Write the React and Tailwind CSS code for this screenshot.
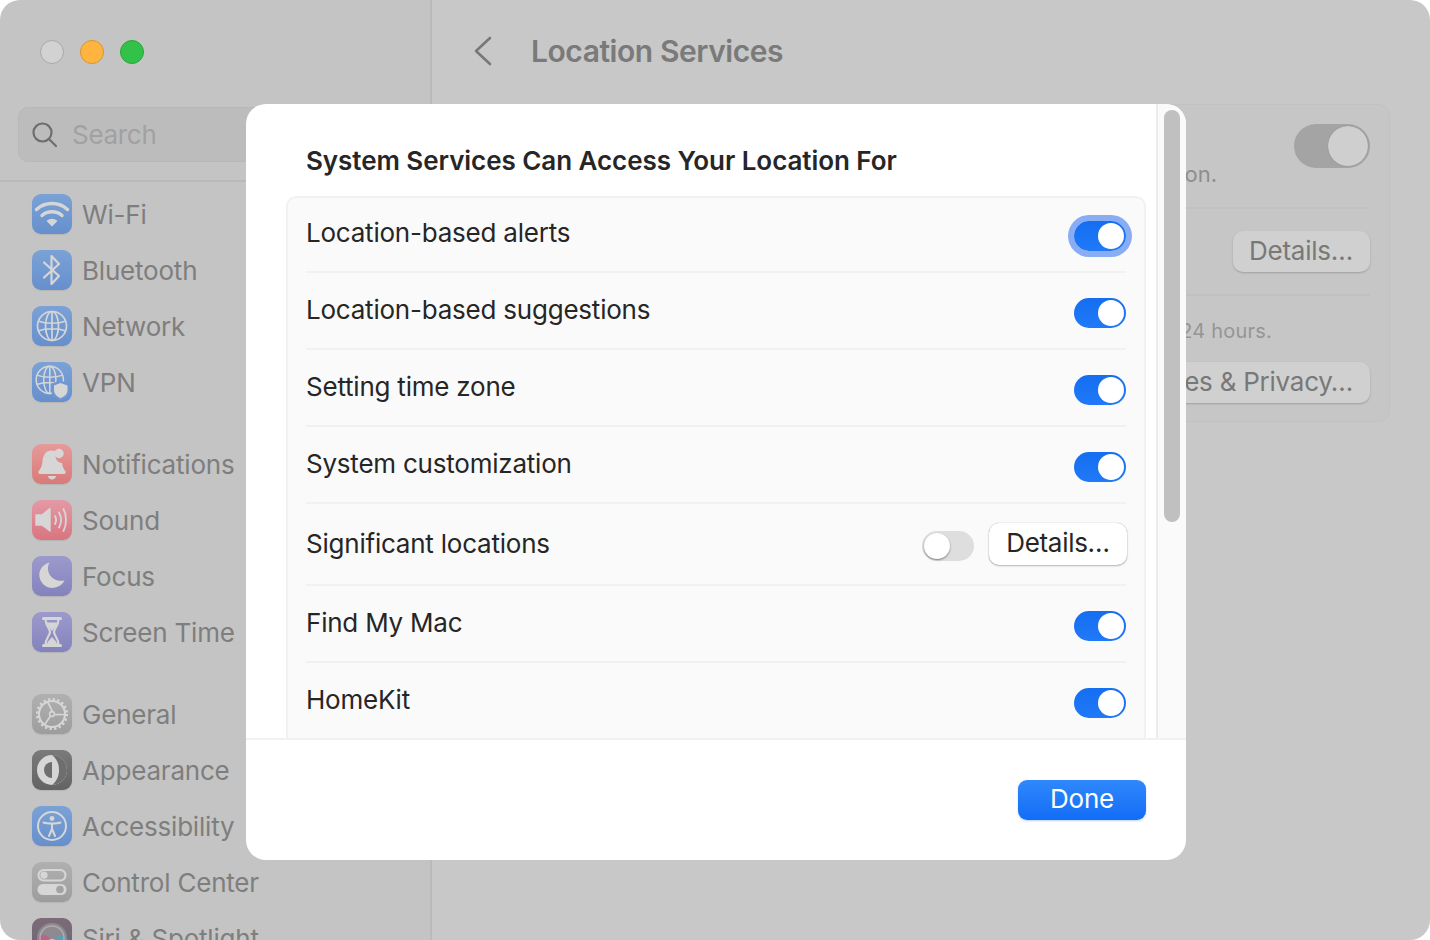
const stroke = '#d6d6d6'

function WifiIcon() {
  return (
    <svg viewBox="0 0 40 40" className="w-10 h-10" fill="none" stroke={stroke} strokeLinecap="round">
      <path d="M4.5 15.5C13 7.5 27 7.5 35.5 15.5" strokeWidth="3.4" />
      <path d="M10 21.5C15.5 16.5 24.5 16.5 30 21.5" strokeWidth="3.4" />
      <path d="M15.5 27C18 25 22 25 24.5 27L20 31.5Z" fill={stroke} strokeWidth="1.4" strokeLinejoin="round" />
    </svg>
  )
}

function BluetoothIcon() {
  return (
    <svg viewBox="0 0 40 40" className="w-10 h-10" fill="none" stroke={stroke} strokeWidth="2.2" strokeLinecap="round" strokeLinejoin="round">
      <path d="M12 12.5L27 26L19.5 34V6L27 14L12 27.5" />
    </svg>
  )
}

function Globe({ small }) {
  return (
    <g fill="none" stroke={stroke} strokeWidth={small ? 1.6 : 1.7}>
      <circle cx="20" cy="20" r="14.5" />
      <ellipse cx="20" cy="20" rx="6.5" ry="14.5" />
      <path d="M6 15C14 18 26 18 34 15M6 25C14 22 26 22 34 25M20 5.5V34.5" />
    </g>
  )
}

function NetworkIcon() {
  return (
    <svg viewBox="0 0 40 40" className="w-10 h-10">
      <Globe />
    </svg>
  )
}

function VpnIcon() {
  return (
    <svg viewBox="0 0 40 40" className="w-10 h-10">
      <g transform="translate(-1 -1) scale(0.94)">
        <Globe small />
      </g>
      <path d="M28 19.5L37 22.5V28C37 32.5 33.5 35.5 28 37.5C24 35.5 20 32.5 20 28V22.5Z" fill="#6f98d2" stroke="#6f98d2" strokeWidth="2" />
      <path d="M28.5 21L35.5 23.5V28C35.5 32 32.5 34.5 28.5 36.3C25 34.5 22 32 22 28V23.5Z" fill={stroke} />
    </svg>
  )
}

function BellIcon() {
  return (
    <svg viewBox="0 0 40 40" className="w-10 h-10" fill={stroke}>
      <path d="M20 6.5C13.5 6.5 11 11.5 10.5 17C10 22.5 8.5 25 6.5 27.5C6 28.5 6.5 30 8 30H32C33.5 30 34 28.5 33.5 27.5C31.5 25 30.3 22 30 19C26 19 22.5 15.5 23.3 7.3C22.3 6.8 21.2 6.5 20 6.5Z" />
      <circle cx="27" cy="9.5" r="4.7" />
      <path d="M16 32H24C23.6 34.3 22 35.5 20 35.5C18 35.5 16.4 34.3 16 32Z" />
    </svg>
  )
}

function SoundIcon() {
  return (
    <svg viewBox="0 0 40 40" className="w-10 h-10" fill="none" stroke={stroke} strokeLinecap="round">
      <path d="M4 15H10L18 8.5V31L10 25H4Z" fill={stroke} strokeWidth="1.4" strokeLinejoin="round" />
      <path d="M23 16C24.4 18.5 24.4 21.5 23 24" strokeWidth="1.8" />
      <path d="M27 12.5C29.5 17 29.5 23 27 27.5" strokeWidth="1.8" />
      <path d="M31.5 9C34.8 15 34.8 25 31.5 31" strokeWidth="1.8" />
    </svg>
  )
}

function MoonIcon() {
  return (
    <svg viewBox="0 0 40 40" className="w-10 h-10" fill={stroke}>
      <path d="M17.5 6.5C9.5 9 6.5 15 7.5 21C8.8 28.5 15.5 32.5 21.5 31.8C26.5 31.3 30.5 28.5 32.5 24.5C25.5 26 18.5 22.5 16.5 16C15.5 12.5 16 9 17.5 6.5Z" />
    </svg>
  )
}

function HourglassIcon() {
  return (
    <svg viewBox="0 0 40 40" className="w-10 h-10" fill="none" stroke={stroke} strokeLinecap="round" strokeLinejoin="round">
      <path d="M11.5 6.5H28.5M11.5 33.5H28.5" strokeWidth="3" />
      <path d="M13.5 7C13.5 14 18 16.5 18 20C18 23.5 13.5 26 13.5 33M26.5 7C26.5 14 22 16.5 22 20C22 23.5 26.5 26 26.5 33" strokeWidth="2.2" />
      <path d="M15.5 11H24.5C24 14 21 16.5 20 18.5C19 16.5 16 14 15.5 11Z" fill={stroke} strokeWidth="1" />
      <path d="M15.5 32C15.8 29 19 27 20 25.5C21 27 24.2 29 24.5 32Z" fill={stroke} strokeWidth="1" />
    </svg>
  )
}

function GearIcon() {
  return (
    <svg viewBox="0 0 40 40" className="w-10 h-10" fill="none" stroke={stroke}>
      <circle cx="20" cy="20" r="13" strokeWidth="2" />
      <circle cx="20" cy="20" r="14.6" strokeWidth="3" strokeDasharray="2.2 2.4" />
      <circle cx="20" cy="20" r="2.4" strokeWidth="1.6" />
      <path d="M20.5 17.6L16 8.5M22.3 20.6L32 20.5M18.5 22L13 30" strokeWidth="1.7" />
    </svg>
  )
}

function AppearanceIcon() {
  return (
    <svg viewBox="0 0 40 40" className="w-10 h-10">
      <circle cx="20" cy="20" r="15" fill={stroke} />
      <path d="M20 5A15 15 0 0 1 20 35C25 31 27 26 27 20C27 14 25 9 20 5Z" fill="#6e6e6e" />
      <path d="M20 12A8 8 0 0 0 20 28Z" fill="#6e6e6e" />
    </svg>
  )
}

function AccessibilityIcon() {
  return (
    <svg viewBox="0 0 40 40" className="w-10 h-10" fill="none" stroke={stroke}>
      <circle cx="20" cy="20" r="14" strokeWidth="2" />
      <circle cx="20" cy="12.5" r="2.4" fill={stroke} stroke="none" />
      <path d="M11.5 16.5C15 17.8 25 17.8 28.5 16.5M20 18V23M20 23L17 30M20 23L23 30" strokeWidth="2.1" strokeLinecap="round" />
    </svg>
  )
}

function ControlIcon() {
  return (
    <svg viewBox="0 0 40 40" className="w-10 h-10">
      <rect x="6.5" y="8" width="27" height="10.5" rx="5.2" fill="none" stroke={stroke} strokeWidth="2" />
      <circle cx="12" cy="13.2" r="3.6" fill={stroke} />
      <rect x="5.5" y="22" width="29" height="11" rx="5.5" fill={stroke} />
      <circle cx="28" cy="27.5" r="3.8" fill="#a2a2a2" />
    </svg>
  )
}

function SiriIcon() {
  return (
    <svg viewBox="0 0 40 40" className="w-10 h-10" fill="none">
      <circle cx="20" cy="20" r="15" fill="#8e8a90" />
      <circle cx="12" cy="24" r="7" fill="#b9658a" />
      <circle cx="29" cy="24" r="7" fill="#5f9fb0" />
      <circle cx="20" cy="27" r="6" fill="#d0d0d0" />
      <circle cx="20" cy="20" r="12" stroke="#b0acb0" strokeWidth="1.5" />
    </svg>
  )
}

const groups = [
  [
    { label: 'Wi-Fi', icon: WifiIcon, tile: 'from-[#7ba2d6] to-[#668fcd]' },
    { label: 'Bluetooth', icon: BluetoothIcon, tile: 'from-[#7ba2d6] to-[#668fcd]' },
    { label: 'Network', icon: NetworkIcon, tile: 'from-[#7ba2d6] to-[#668fcd]' },
    { label: 'VPN', icon: VpnIcon, tile: 'from-[#7ba2d6] to-[#668fcd]' },
  ],
  [
    { label: 'Notifications', icon: BellIcon, tile: 'from-[#e69a9a] to-[#d87a78]' },
    { label: 'Sound', icon: SoundIcon, tile: 'from-[#e39aa6] to-[#d9747f]' },
    { label: 'Focus', icon: MoonIcon, tile: 'from-[#9c9acb] to-[#8482bd]' },
    { label: 'Screen Time', icon: HourglassIcon, tile: 'from-[#9c9acb] to-[#8482bd]' },
  ],
  [
    { label: 'General', icon: GearIcon, tile: 'from-[#b0b0b0] to-[#9d9d9d]' },
    { label: 'Appearance', icon: AppearanceIcon, tile: 'from-[#7a7a7a] to-[#636363]' },
    { label: 'Accessibility', icon: AccessibilityIcon, tile: 'from-[#7ba2d6] to-[#668fcd]' },
    { label: 'Control Center', icon: ControlIcon, tile: 'from-[#b0b0b0] to-[#9d9d9d]' },
    { label: 'Siri & Spotlight', icon: SiriIcon, tile: 'from-[#7c6a78] to-[#6a6a74]' },
  ],
]

function SidebarItem({ label, icon: Icon, tile }) {
  return (
    <div className="flex items-center h-[56px] shrink-0 pl-[32px] whitespace-nowrap">
      <div className={`w-10 h-10 shrink-0 rounded-[9px] bg-gradient-to-b ${tile} shadow-[0_1px_1px_rgba(0,0,0,0.08)]`}>
        <Icon />
      </div>
      <span className="ml-[10px] mt-[2px] text-[26px] leading-none tracking-[-0.2px] text-[#7e7e7e]">{label}</span>
    </div>
  )
}

function Sidebar() {
  return (
    <aside className="w-[432px] shrink-0 bg-[#c4c4c4] border-r-2 border-[#bababa] flex flex-col">
      <div className="flex gap-[16px] pl-[40px] pt-[40px] h-[107px] shrink-0">
        <div className="w-6 h-6 rounded-full bg-[#d2d2d2] border border-[#a8a8a8]" />
        <div className="w-6 h-6 rounded-full bg-[#ffb43f] border border-[#d8962f]" />
        <div className="w-6 h-6 rounded-full bg-[#32c24a] border border-[#27a63c]" />
      </div>
      <div className="ml-[18px] mr-[14px] h-[55px] shrink-0 rounded-[10px] bg-[#bcbcbc] border border-[#b8b8b8] flex items-center pl-[13px]">
        <svg viewBox="0 0 26 26" className="w-[26px] h-[26px] mr-[1px]" fill="none" stroke="#6e6e6e" strokeWidth="2.2" strokeLinecap="round">
          <circle cx="10.5" cy="10.5" r="9" />
          <path d="M17 17L24 24" />
        </svg>
        <span className="ml-[13px] text-[26px] leading-none tracking-[-0.3px] text-[#a1a1a1]">Search</span>
      </div>
      <div className="mt-[18px] h-[2px] shrink-0 bg-[#b9b9b9]" />
      <div className="pt-[4px] flex flex-col gap-[26px] shrink-0">
        {groups.map((items, i) => (
          <div key={i} className="flex flex-col">
            {items.map(item => <SidebarItem key={item.label} {...item} />)}
          </div>
        ))}
      </div>
    </aside>
  )
}

function BackToggle() {
  return (
    <div className="w-[76px] h-[44px] rounded-full bg-[#a4a4a4] flex justify-end items-center pr-[2px]">
      <div className="w-[40px] h-[40px] rounded-full bg-[#cfcfcf] shadow-[0_0_1px_rgba(0,0,0,0.3)]" />
    </div>
  )
}

function BackButton({ children, className = '' }) {
  return (
    <div className={`h-[41px] pb-[2px] rounded-[10px] bg-[#d0d0d0] shadow-[0_1px_2px_rgba(0,0,0,0.2)] flex items-center justify-end pr-[17px] text-[26px] leading-none tracking-[-0.24px] text-[#787878] whitespace-nowrap ${className}`}>
      {children}
    </div>
  )
}

function MainPane() {
  return (
    <main className="flex-1 min-w-0 bg-[#c8c8c8] flex flex-col">
      <header className="h-[102px] mb-[2px] flex items-center pl-[42px] shrink-0">
        <svg viewBox="0 0 18 30" className="w-[18px] h-[30px]" fill="none" stroke="#787878" strokeWidth="2.6" strokeLinecap="round" strokeLinejoin="round">
          <path d="M16 2L2 15L16 28" />
        </svg>
        <h1 className="ml-[39px] text-[30px] leading-none font-semibold text-[#7a7a7a] tracking-[-0.44px]">Location Services</h1>
      </header>
      <section className="ml-[39px] mr-[40px] h-[318px] shrink-0 rounded-[12px] bg-[#c6c6c6] border border-[#c1c1c1] px-[19px] flex flex-col">
        <div className="h-[104px] shrink-0 pt-[19px] relative border-b-2 border-[#c1c1c1] flex justify-end">
          <BackToggle />
          <span className="absolute right-[153px] top-[58px] text-[22px] leading-none text-[#8e8e8e]">on.</span>
        </div>
        <div className="h-[87px] shrink-0 flex justify-end items-center border-b-2 border-[#c1c1c1]">
          <BackButton className="w-[137px] pr-[17px]">Details…</BackButton>
        </div>
        <div className="flex-1 flex flex-col items-end pt-[25px]">
          <span className="text-[20px] leading-none text-[#959595] tracking-[0.2px] mr-[98px]">24 hours.</span>
          <BackButton className="mt-[21px]">About Location Services &amp; Privacy…</BackButton>
        </div>
      </section>
    </main>
  )
}

function Toggle({ on = true, focus = false }) {
  if (!on) {
    return (
      <div className="w-[52px] h-[30px] rounded-full bg-[#dedede] flex items-center pl-[2px]">
        <div className="w-[26px] h-[26px] rounded-full bg-white shadow-[0_1px_2px_rgba(0,0,0,0.45)]" />
      </div>
    )
  }
  return (
    <div className={`w-[52px] h-[30px] rounded-full bg-gradient-to-b from-[#156ef0] to-[#2079f8] flex items-center justify-end pr-[2px] ${focus ? 'ring-[6px] ring-[#88adf4]' : ''}`}>
      <div className="w-[26px] h-[26px] rounded-full bg-white" />
    </div>
  )
}

const rows = [
  { label: 'Location-based alerts', focus: true },
  { label: 'Location-based suggestions' },
  { label: 'Setting time zone' },
  { label: 'System customization' },
  { label: 'Significant locations', off: true },
  { label: 'Find My Mac' },
  { label: 'HomeKit' },
]

function Row({ label, off, focus }) {
  return (
    <div className={`${off ? 'h-[82px]' : 'h-[77px]'} flex items-center border-b-2 border-[#f1f1f1] shrink-0`}>
      <span className="flex-1 text-[26px] leading-none tracking-[-0.22px] text-[#262626] mb-[1px]">{label}</span>
      {off ? (
        <div className="flex items-center gap-[15px]">
          <div className="mt-[4px]">
            <Toggle on={false} />
          </div>
          <button className="w-[138px] h-[42px] pb-[2px] mr-[-1px] rounded-[10px] bg-white shadow-[0_0_1px_rgba(0,0,0,0.35),0_1px_2px_rgba(0,0,0,0.25)] text-[26px] leading-none tracking-[-0.3px] text-[#262626]">
            Details…
          </button>
        </div>
      ) : (
        <div className="mt-[5px]">
          <Toggle focus={focus} />
        </div>
      )}
    </div>
  )
}

function Dialog() {
  return (
    <div className="absolute left-[246px] top-[104px] w-[940px] h-[756px] rounded-[20px] bg-white overflow-hidden flex flex-col">
      <div className="h-[634px] flex shrink-0 overflow-hidden">
        <div className="w-[910px] shrink-0 pl-[40px] flex flex-col">
          <h2 className="pl-[20px] pt-[44px] h-[92px] shrink-0 text-[26px] leading-none font-semibold text-[#262626] tracking-[-0.06px] whitespace-nowrap">
            System Services Can Access Your Location For
          </h2>
          <div className="w-[860px] h-[600px] shrink-0 rounded-[10px] bg-[#fafafa] border-2 border-[#f1f1f1] px-[18px]">
            <div className="mt-[-2px] flex flex-col">
              {rows.map(r => <Row key={r.label} {...r} />)}
            </div>
          </div>
        </div>
        <div className="flex-1 bg-[#fafafa] border-l-2 border-[#ececec] pl-[6px] pt-[6px]">
          <div className="w-[16px] h-[412px] rounded-full bg-[#c0c0c0]" />
        </div>
      </div>
      <footer className="flex-1 border-t-2 border-[#f1f1f1] flex justify-end pt-[40px] pr-[40px]">
        <button className="w-[128px] h-[40px] pb-[2px] rounded-[9px] bg-gradient-to-b from-[#2f88fb] to-[#126cf6] shadow-[0_1px_2px_rgba(20,110,245,0.3)] text-[26px] leading-none tracking-[-0.2px] text-white">
          Done
        </button>
      </footer>
    </div>
  )
}

export default function App() {
  return (
    <div className="w-[1430px] h-[940px] bg-white overflow-hidden font-[Inter,sans-serif]">
      <div className="relative w-full h-full rounded-[20px] overflow-hidden flex">
        <Sidebar />
        <MainPane />
        <Dialog />
      </div>
    </div>
  )
}
